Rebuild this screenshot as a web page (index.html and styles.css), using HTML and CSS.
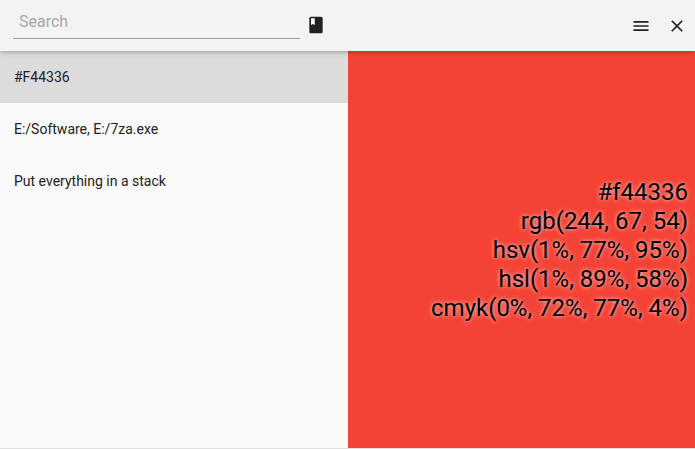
FILE: index.html
```html
<!DOCTYPE html>
<html>
<head>
	<title>Launcher</title>
	<meta charset="utf-8"/>
	<link rel="stylesheet" href="styles.css">
</head>
<body>
	<div class="toolbar">
		<div class="search">Search</div>
		<svg class="book" width="20" height="20" viewBox="0 0 24 24">
			<path fill="#212121" d="M18 2H6c-1.100 0-2 .9-2 2v16c0 1.100.9 2 2 2h12c1.100 0 2-.9 2-2V4c0-1.100-.9-2-2-2z"/>
			<path fill="#fff" d="M6 4h4.500v8L8.250 10.800 6 12z"/>
		</svg>
		<div class="spacer"></div>
		<svg class="tool" width="20" height="20" viewBox="0 0 24 24">
			<path fill="#212121" d="M3 18h18v-2H3v2zm0-5h18v-2H3v2zm0-7v2h18V6H3z"/>
		</svg>
		<svg class="tool" width="20" height="20" viewBox="0 0 24 24">
			<path fill="#212121" d="M19 6.410L17.590 5 12 10.590 6.410 5 5 6.410 10.590 12 5 17.590 6.410 19 12 13.410 17.590 19 19 17.590 13.410 12z"/>
		</svg>
	</div>
	<div class="main">
		<div class="list">
			<div class="item selected">#F44336</div>
			<div class="item">E:/Software, E:/7za.exe</div>
			<div class="item">Put everything in a stack</div>
		</div>
		<div class="preview">
			<div>#f44336</div>
			<div>rgb(244, 67, 54)</div>
			<div>hsv(1%, 77%, 95%)</div>
			<div>hsl(1%, 89%, 58%)</div>
			<div>cmyk(0%, 72%, 77%, 4%)</div>
		</div>
	</div>
</body>
</html>
```

FILE: styles.css
```css
html, body {
	margin: 0;
	padding: 0;
	height: 100%;
	overflow: hidden;
}

body {
	display: flex;
	flex-direction: column;
	height: 449px;
	box-sizing: border-box;
	border-bottom: 1px solid #e0e0e0;
	background: #fafafa;
	font-family: Roboto, sans-serif;
	color: #212121;
}

.toolbar {
	display: flex;
	align-items: center;
	flex: none;
	height: 51px;
	padding: 0 8px 0 13px;
	background: #f3f3f3;
	box-shadow: 0 1px 5px rgba(0,0,0,.3);
	position: relative;
	z-index: 1;
}

.search {
	align-self: flex-start;
	width: 287px;
	height: 39px;
	box-sizing: border-box;
	padding: 12px 0 0 6px;
	border-bottom: 1px solid #9e9e9e;
	font-size: 16px;
	line-height: 19px;
	color: #a8a8a8;
}

.book {
	margin: 0 0 1px 6px;
}

.spacer {
	flex: 1;
}

.tool {
	margin-left: 16px;
}

.main {
	display: flex;
	flex: 1;
	min-height: 0;
}

.list {
	width: 348px;
	flex: none;
}

.item {
	height: 52px;
	padding-left: 14px;
	font-size: 14px;
	line-height: 52px;
}

.selected {
	background: #dcdcdc;
}

.preview {
	flex: 1;
	display: flex;
	flex-direction: column;
	justify-content: center;
	align-items: flex-end;
	padding: 2px 7px 0 0;
	background: #f44336;
	font-size: 24px;
	line-height: 29px;
	color: #000;
	text-shadow: 0 0 4px rgba(255,255,255,.8);
}
```
